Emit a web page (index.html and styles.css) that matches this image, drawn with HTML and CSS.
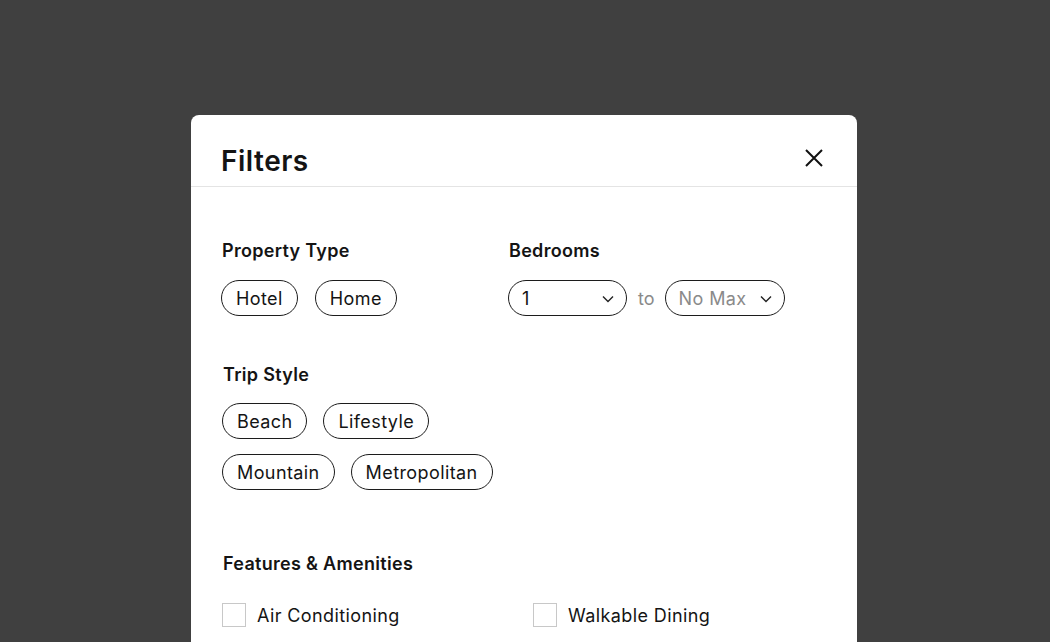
FILE: index.html
```html
<!DOCTYPE html>
<html lang="en">
<head>
<meta charset="utf-8">
<title>Filters</title>
<link rel="stylesheet" href="styles.css">
</head>
<body>
<div class="modal">
  <div class="modal-header">
    <h1 class="title">Filters</h1>
    <button class="close" aria-label="Close">
      <svg width="18" height="18" viewBox="0 0 18 18"><path d="M1 1L17 17M17 1L1 17" stroke="#111" stroke-width="2" fill="none"/></svg>
    </button>
  </div>
  <div class="modal-body">
    <div class="row">
      <div class="section col-left">
        <h2 class="label">Property Type</h2>
        <div class="chips">
          <span class="chip">Hotel</span>
          <span class="chip">Home</span>
        </div>
      </div>
      <div class="section">
        <h2 class="label">Bedrooms</h2>
        <div class="range">
          <div class="select w1"><span>1</span><svg width="12" height="8" viewBox="0 0 12 8"><path d="M1 1.5L6 6.5L11 1.5" stroke="#222" stroke-width="1.4" fill="none"/></svg></div>
          <span class="to">to</span>
          <div class="select w2"><span class="ph">No Max</span><svg width="12" height="8" viewBox="0 0 12 8"><path d="M1 1.5L6 6.5L11 1.5" stroke="#222" stroke-width="1.4" fill="none"/></svg></div>
        </div>
      </div>
    </div>
    <div class="section trip">
      <h2 class="label">Trip Style</h2>
      <div class="chips wrap">
        <div class="chip-row">
          <span class="chip">Beach</span>
          <span class="chip">Lifestyle</span>
        </div>
        <div class="chip-row">
          <span class="chip">Mountain</span>
          <span class="chip">Metropolitan</span>
        </div>
      </div>
    </div>
    <div class="section features">
      <h2 class="label">Features &amp; Amenities</h2>
      <div class="checks">
        <label class="check"><span class="box"></span>Air Conditioning</label>
        <label class="check"><span class="box"></span>Walkable Dining</label>
      </div>
    </div>
  </div>
</div>
</body>
</html>
```
FILE: styles.css
```css
* { box-sizing: border-box; }
html, body { margin: 0; padding: 0; }
body {
  background: #404040;
  height: 642px;
  overflow: hidden;
  padding-right: 2px;
  font-family: "Inter", "Liberation Sans", sans-serif;
  color: #141414;
}
.modal {
  width: 666px;
  margin: 115px auto 0;
  background: #fff;
  border-radius: 8px 8px 0 0;
  min-height: 600px;
}
.modal-header {
  height: 72px;
  border-bottom: 1px solid #e4e4e4;
  display: flex;
  align-items: center;
  justify-content: space-between;
  padding: 20px 34px 0 30px;
}
.title {
  margin: 0;
  font-size: 28px;
  line-height: 34px;
  font-weight: 600;
  letter-spacing: 0.5px;
}
.close {
  background: none;
  border: 0;
  padding: 0;
  width: 18px;
  height: 18px;
  display: flex;
  margin-top: -6px;
  cursor: pointer;
}
.modal-body {
  padding: 53px 30px 0 30px;
}
.row { display: flex; }
.col-left { width: 287px; flex: none; }
.label {
  margin: 0 0 18px 1px;
  font-size: 18px;
  line-height: 22px;
  font-weight: 600;
  letter-spacing: 0.3px;
}
.chips { display: flex; gap: 17px; }
.chips.wrap { flex-direction: column; gap: 15px; }
.chip-row { display: flex; gap: 16px; }
.chip {
  display: inline-flex;
  align-items: center;
  height: 36px;
  padding: 0 14px;
  border: 1.5px solid #1c1c1c;
  border-radius: 18px;
  font-size: 18px;
  letter-spacing: 0.4px;
}
.range { display: flex; align-items: center; }
.select {
  height: 36px;
  border: 1.5px solid #1c1c1c;
  border-radius: 18px;
  display: flex;
  align-items: center;
  justify-content: space-between;
  padding: 0 12px 0 13px;
  font-size: 18px;
  letter-spacing: 0.4px;
}
.select.w1 { width: 119px; }
.select.w2 { width: 120px; }
.select svg { margin-top: 1px; }
.ph { color: #8a8a8a; }
.to { color: #8a8a8a; font-size: 18px; margin: 0 10px 0 11px; }
.trip { margin-top: 48px; }
.trip .label { margin-left: 2px; margin-bottom: 17px; }
.trip .chips { padding-left: 1px; }
.features { margin-top: 63px; }
.features .label { margin-left: 2px; margin-bottom: 28px; }
.checks { display: flex; padding-left: 1px; }
.check {
  display: flex;
  align-items: center;
  font-size: 18px;
  letter-spacing: 0.4px;
}
.check:first-child { width: 311px; flex: none; }
.box {
  width: 24px;
  height: 24px;
  border: 1px solid #c8c8c8;
  margin-right: 11px;
  flex: none;
}
```
